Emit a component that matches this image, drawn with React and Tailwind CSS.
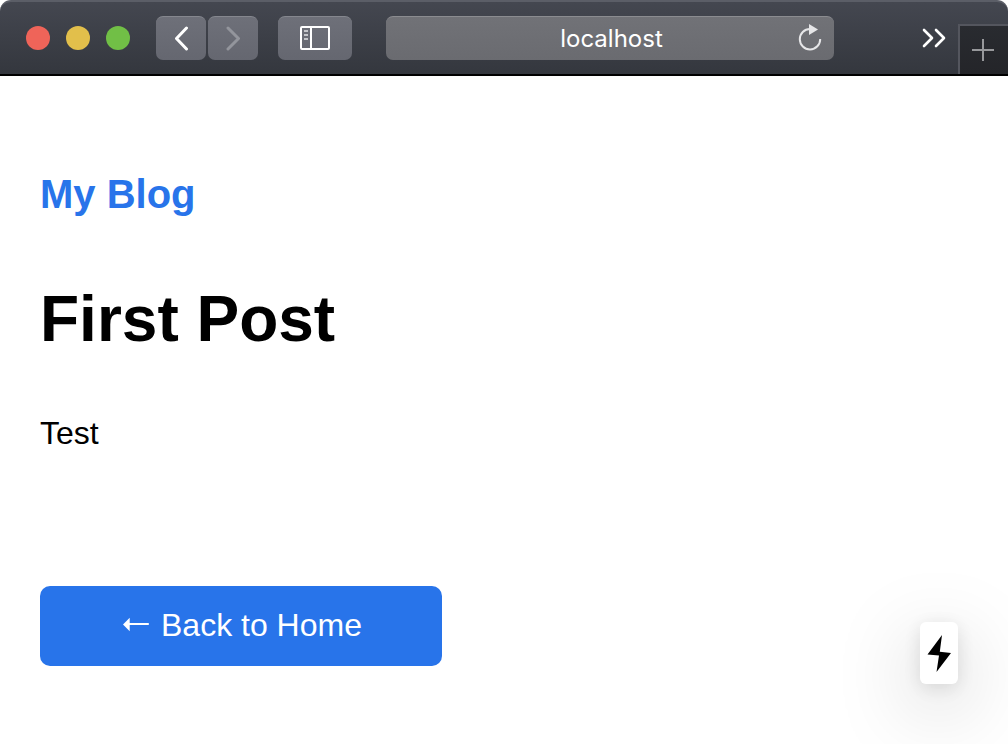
function BrowserBar() {
  return (
    <header className="flex h-[76px] items-center overflow-hidden rounded-t-[11px] border-y-2 border-t-[#5b5e67] border-b-black bg-linear-to-b from-[#444750] to-[#34373e] pl-[26px]">
      <div className="flex shrink-0 gap-4">
        <button type="button" aria-label="Close" className="size-6 rounded-full bg-[#ef6459]" />
        <button type="button" aria-label="Minimize" className="size-6 rounded-full bg-[#e2bf4b]" />
        <button type="button" aria-label="Maximize" className="size-6 rounded-full bg-[#71bf46]" />
      </div>
      <nav aria-label="History" className="ml-[26px] flex shrink-0 gap-0.5">
        <button
          type="button"
          aria-label="Back"
          className="flex h-11 w-[50px] items-center justify-center rounded-[7px] border-t border-[#85878e] bg-linear-to-b from-[#6e7079] to-[#656770]"
        >
          <svg width="16" height="26" viewBox="0 0 16 26" fill="none" stroke="#fff" strokeWidth="3" strokeLinecap="round" strokeLinejoin="round">
            <path d="M13.5 2 3.5 12.5 13.5 23" />
          </svg>
        </button>
        <button
          type="button"
          aria-label="Forward"
          className="flex h-11 w-[50px] items-center justify-center rounded-[7px] border-t border-[#85878e] bg-linear-to-b from-[#6e7079] to-[#656770]"
        >
          <svg width="16" height="26" viewBox="0 0 16 26" fill="none" stroke="#93959c" strokeWidth="3" strokeLinecap="round" strokeLinejoin="round">
            <path d="M3 2 13.5 12.5 3 23" />
          </svg>
        </button>
      </nav>
      <button
        type="button"
        aria-label="Show sidebar"
        className="ml-5 flex h-11 w-[74px] shrink-0 items-center justify-center rounded-[7px] border-t border-[#85878e] bg-linear-to-b from-[#6e7079] to-[#656770]"
      >
        <svg width="30" height="25" viewBox="0 0 30 25" fill="none">
          <rect x="1" y="1" width="28" height="22" rx="1" stroke="#fff" strokeWidth="2" />
          <path d="M11 1v22" stroke="#fff" strokeWidth="2" />
          <path d="M4 5h4M4 9h4M4 13h4" stroke="#c5c6ca" strokeWidth="2" />
        </svg>
      </button>
      <div className="relative ml-[34px] h-11 min-w-0 flex-1">
        <input
          type="text"
          aria-label="Address"
          defaultValue="localhost"
          className="block h-11 w-full rounded-[7px] border-t border-[#8b8c90] bg-linear-to-b from-[#717277] to-[#6a6b70] pl-[3px] text-center font-['Inter',sans-serif] text-2xl text-white outline-none"
        />
        <button type="button" aria-label="Reload" className="absolute top-2 right-3 h-7 w-6">
          <svg width="24" height="28" viewBox="0 0 24 28" fill="none">
            <path d="M12 5A10.2 10.2 0 1 0 22.2 15" stroke="#e6e6e8" strokeWidth="2" />
            <path d="M11 0 20 5.5 11 11Z" fill="#e6e6e8" />
          </svg>
        </button>
      </div>
      <button type="button" aria-label="More" className="ml-[88px] shrink-0">
        <svg width="24" height="20" viewBox="0 0 24 20" fill="none" stroke="#fff" strokeWidth="2.6" strokeLinecap="round" strokeLinejoin="round">
          <path d="m2 2 8 8-8 8M14 2l8 8-8 8" />
        </svg>
      </button>
      <button
        type="button"
        aria-label="New tab"
        className="ml-3 flex h-[50px] w-[50px] shrink-0 items-center justify-center self-end border-t-2 border-l-2 border-[#54565e] bg-linear-to-b from-[#292b30] to-[#242529]"
      >
        <svg width="24" height="22" viewBox="0 0 24 22" fill="none" stroke="#97989b" strokeWidth="2">
          <path d="M11 0v22M0 11h22" />
        </svg>
      </button>
    </header>
  );
}

function ArrowLeft() {
  return (
    <svg width="32" height="32" viewBox="0 0 32 32" fill="#fff" role="img" aria-label="←">
      <path d="M3 15.5 9.7 8.8V14H28.8V16H9.7V22.2Z" />
    </svg>
  );
}

function Post() {
  return (
    <main className="flex flex-col items-start px-10 pt-[94px] pb-[78px]">
      <a href="#home" className="text-[40px] leading-[48px] font-bold text-[#2874ea]">
        My Blog
      </a>
      <h1 className="mt-[61px] text-[64px] leading-[80px] font-bold">First Post</h1>
      <p className="mt-[50px] text-[32px] leading-[48px]">Test</p>
      <a
        href="#home"
        className="mt-[129px] flex h-20 items-center gap-[9px] rounded-[10px] bg-[#2874ea] px-20 pb-0.5 text-[32px] leading-[48px] text-white"
      >
        <ArrowLeft />
        Back to Home
      </a>
    </main>
  );
}

export default function App() {
  return (
    <div className="min-h-screen bg-white font-['Liberation_Sans',Arial,sans-serif] text-black">
      <BrowserBar />
      <Post />
      <button
        type="button"
        aria-label="Build activity"
        className="fixed right-[50px] bottom-[60px] flex h-[62px] w-[38px] items-center justify-center rounded-md bg-white shadow-[0_22px_80px_0_rgba(0,0,0,0.25),0_4px_20px_0_rgba(0,0,0,0.12)]"
      >
        <svg width="24" height="38" viewBox="0 0 24 38" fill="#000">
          <path d="M15 1 0.5 20.5 12 21.5 9.5 38 24 19 12.8 17.8Z" />
        </svg>
      </button>
    </div>
  );
}
